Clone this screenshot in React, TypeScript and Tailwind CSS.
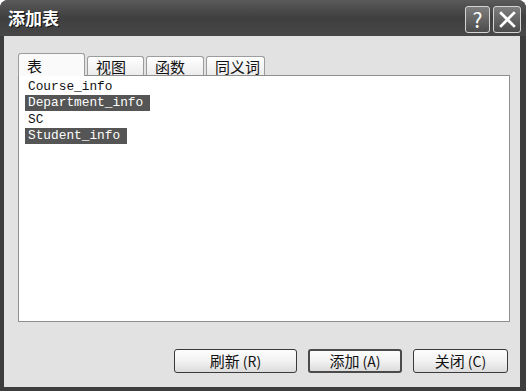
const items = [
  { name: 'Course_info', selected: false },
  { name: 'Department_info', selected: true },
  { name: 'SC', selected: false },
  { name: 'Student_info', selected: true },
]

const tabs = [
  { label: '表', width: 'w-[67px]', active: true },
  { label: '视图', width: 'w-[57px]', active: false },
  { label: '函数', width: 'w-[58px]', active: false },
  { label: '同义词', width: 'w-[59px]', active: false },
]

function DialogButton({ label, hotkey, width, isDefault }: { label: string; hotkey: string; width: string; isDefault?: boolean }) {
  return (
    <button
      className={`${width} h-[24px] rounded-[3px] bg-gradient-to-b from-[#fdfdfd] via-[#f2f2f2] to-[#dcdcdc] text-[15px] text-[#111] flex items-center justify-center ${
        isDefault ? 'border-2 border-[#4a4a4a]' : 'border border-[#3a3a3a]'
      }`}
    >
      {label}
      <span className="ml-[3px] text-[14px]">({hotkey})</span>
    </button>
  )
}

export default function App() {
  return (
    <div
      className="w-[526px] h-[391px] bg-[#3d3d3d] rounded-t-[8px] flex flex-col overflow-hidden"
      style={{ fontFamily: '"Noto Sans CJK SC", "Noto Sans", sans-serif' }}
    >
      {/* title bar */}
      <div className="h-[36px] shrink-0 flex items-center justify-between pl-[8px] pr-[5px] bg-gradient-to-b from-[#5a5a5a] via-[#3f3f3f] to-[#474747]">
        <span className="text-white font-bold text-[17px] [text-shadow:1px_1px_0_#111]">添加表</span>
        <div className="flex gap-[3px] mt-[2px]">
          <div className="w-[25px] h-[27px] rounded-[3px] border border-[#d4d4d4] bg-gradient-to-b from-[#7e7e7e] to-[#4c4c4c] flex items-center justify-center text-white text-[21px] leading-none">
            ?
          </div>
          <div className="w-[28px] h-[27px] rounded-[3px] border border-[#d4d4d4] bg-gradient-to-b from-[#7e7e7e] to-[#4c4c4c] flex items-center justify-center">
            <svg width="17" height="17" viewBox="0 0 16 16">
              <path d="M2 2 L14 14 M14 2 L2 14" stroke="white" strokeWidth="2.6" strokeLinecap="square" />
            </svg>
          </div>
        </div>
      </div>

      {/* client area */}
      <div className="flex-1 ml-[4px] mr-[6px] mb-[4px] bg-[#e2e2e2] flex flex-col pl-[14px] pr-[10px] pt-[17px]">
        <div className="flex items-end h-[22px]">
          {tabs.map((t) => (
            <div
              key={t.label}
              className={`${t.width} mr-[2px] rounded-t-[3px] border border-b-0 border-[#9c9c9c] text-[15px] leading-none text-[#111] pl-[8px] flex items-center ${
                t.active ? 'h-[23px] bg-[#fafafa] relative top-[1px] z-10' : 'h-[19px] bg-gradient-to-b from-[#ffffff] to-[#ececec]'
              }`}
            >
              {t.label}
            </div>
          ))}
        </div>
        <div className="h-[247px] border border-[#8e8e8e] bg-white pt-[2px] pl-[6px]">
          {items.map((it) => (
            <div key={it.name} className="h-[16.5px] flex items-center">
              <span
                className={`pl-[3px] pr-[7px] h-[16px] flex items-center text-[12.8px] [font-family:'Liberation_Mono',monospace] ${
                  it.selected ? 'bg-[#555555] text-white' : 'text-[#111]'
                }`}
              >
                {it.name}
              </span>
            </div>
          ))}
        </div>
        <div className="flex justify-end gap-[11px] mt-[27px] pr-[2px]">
          <DialogButton label="刷新" hotkey="R" width="w-[123px]" />
          <DialogButton label="添加" hotkey="A" width="w-[94px]" isDefault />
          <DialogButton label="关闭" hotkey="C" width="w-[95px]" />
        </div>
      </div>
    </div>
  )
}
